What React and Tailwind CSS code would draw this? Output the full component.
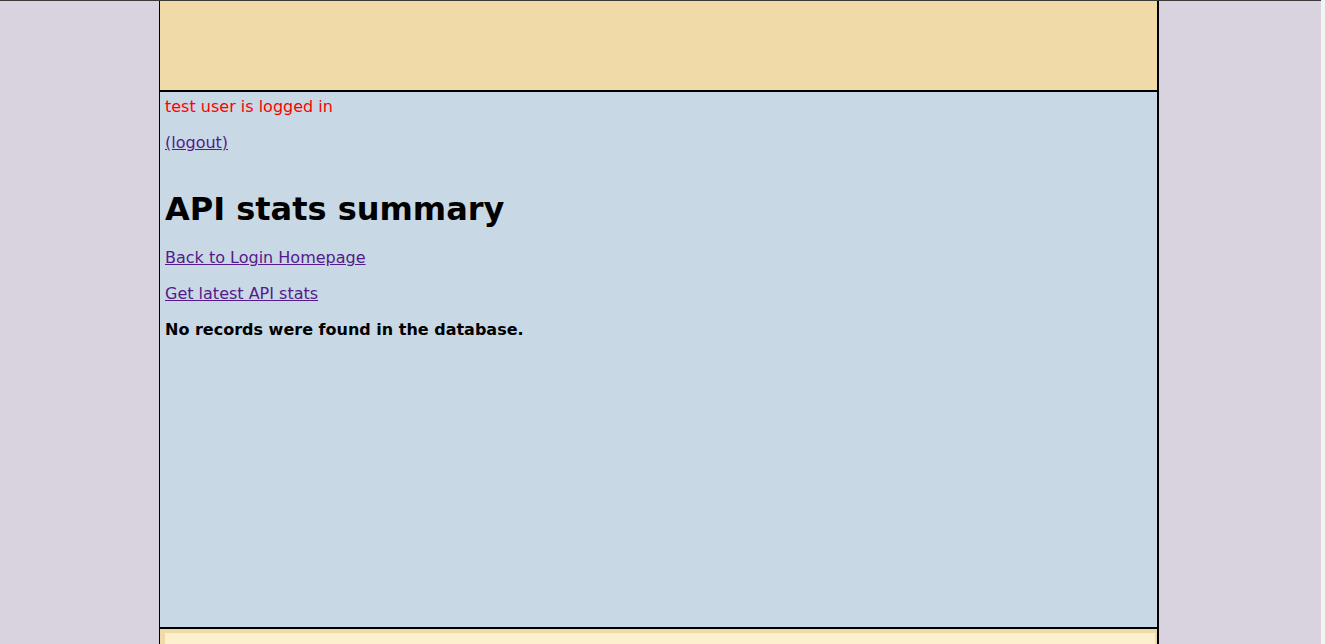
export default function App() {
    return (
        <div className="flex h-[644px] w-[1325px] overflow-hidden bg-[#d9d3df] font-['DejaVu_Sans',sans-serif]">
            <div className="flex-1 border-t border-[#3a3a3a]">
                <div className="ml-[159px] flex h-full w-[1000px] flex-col border-l border-r-2 border-black">
                    {/* header */}
                    <div className="h-[91px] shrink-0 border-b-2 border-black bg-[#f0dba8]"></div>

                    {/* content */}
                    <div className="h-[537px] shrink-0 border-b-2 border-black bg-[#c8d8e5] px-[5px] pt-[5px] text-[16px] leading-[20px]">
                        <p className="text-[#ff0000]">test user is logged in</p>
                        <p className="mt-4">
                            <a href="#" className="text-[#551a8b] underline">
                                (logout)
                            </a>
                        </p>
                        <h1 className="mt-[37px] text-[32px] font-bold leading-[38px] text-black">
                            API stats summary
                        </h1>
                        <p className="mt-[20px]">
                            <a href="#" className="text-[#551a8b] underline">
                                Back to Login Homepage
                            </a>
                        </p>
                        <p className="mt-4">
                            <a href="#" className="text-[#551a8b] underline">
                                Get latest API stats
                            </a>
                        </p>
                        <p className="mt-4 font-bold text-black">
                            No records were found in the database.
                        </p>
                    </div>

                    {/* footer */}
                    <div className="flex-1 bg-[#f0dba8] pl-[5px] pr-[2px] pt-[4px]">
                        <div className="h-full bg-[#fdf0cf]"></div>
                    </div>
                </div>
            </div>
            <div className="w-[4px] bg-[#f4f4f4]"></div>
        </div>
    );
}
